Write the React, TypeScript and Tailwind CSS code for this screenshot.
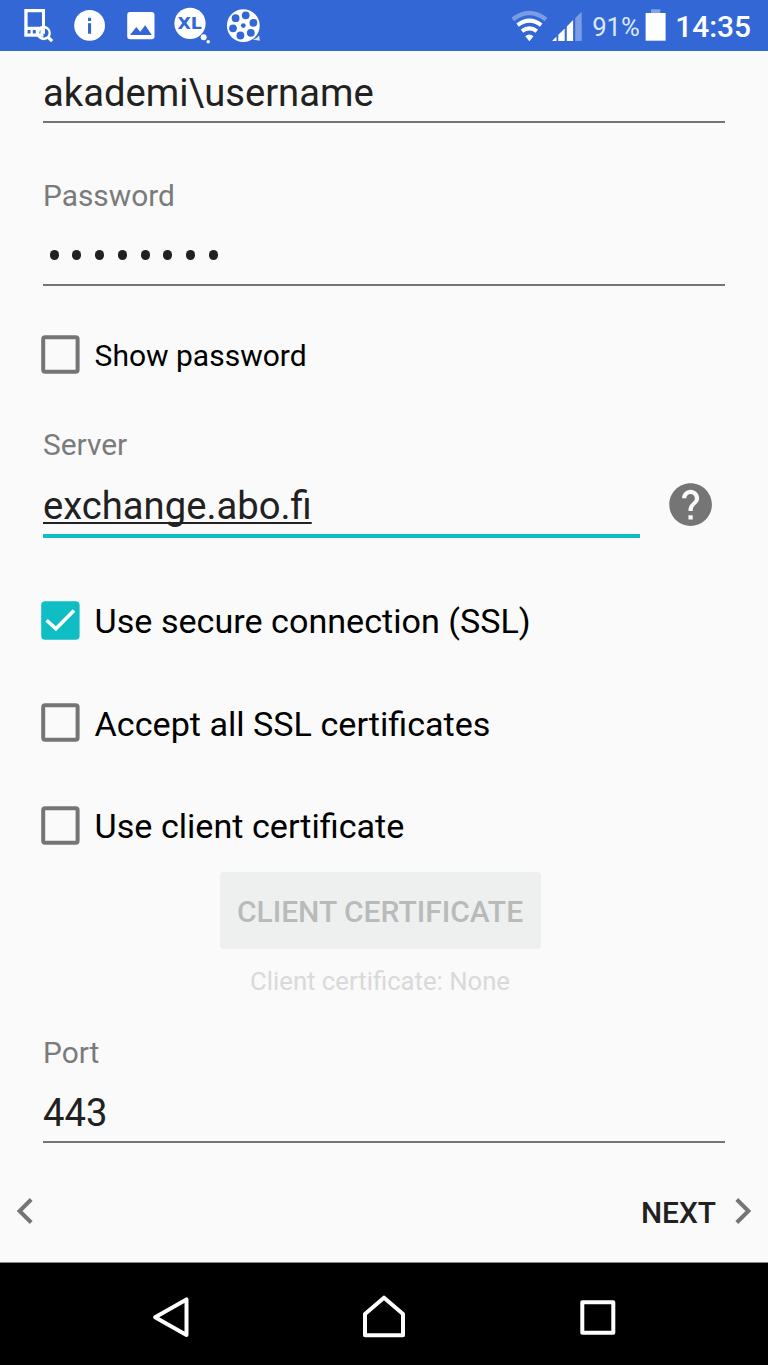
import type { ReactNode } from "react";

const HELP_PATH =
    "M12 2C6.48 2 2 6.48 2 12s4.48 10 10 10 10-4.48 10-10S17.52 2 12 2zm1 17h-2v-2h2v2zm2.07-7.75l-.9.92C13.45 12.9 13 13.5 13 15h-2v-.5c0-1.1.45-2.1 1.17-2.83l1.24-1.26c.37-.36.59-.86.59-1.41 0-1.1-.9-2-2-2s-2 .9-2 2H8c0-2.21 1.79-4 4-4s4 1.79 4 4c0 .88-.36 1.68-.93 2.25z";

function StatusBar() {
    return (
        <header className="flex h-[51px] shrink-0 items-center justify-between bg-[#3367d6] text-white">
            {/* Notifications */}
            <div className="flex pl-[22px]">
                <svg className="h-[51px] w-[32px]" viewBox="22 0 32 51" fill="none">
                    <path d="M24.3 9H45v27.7H24.3z" fill="#fff" />
                    <path d="M27.6 12.2H42v14.6H27.6zM27.6 30h2.9v3.6h-2.9zM32.8 30h2.9v3.6h-2.9zM38 30h2.4v3.6H38z" fill="#3367d6" />
                    <circle cx="43.7" cy="33" r="5.8" stroke="#fff" strokeWidth="2.8" />
                    <path d="M45 28.8a4.3 4.3 0 1 1-1.5 8.5v-3.6h1.5z" fill="#3367d6" />
                    <path d="M47.8 37l4.4 4.2" stroke="#fff" strokeWidth="3.2" />
                </svg>
                <svg className="ml-[19px] h-[51px] w-[33px]" viewBox="73 0 33 51">
                    <circle cx="89.6" cy="25.4" r="15.4" fill="#fff" />
                    <path d="M88 17.8h3.1V21H88zM88 23.2h3.1v10.5H88z" fill="#3367d6" />
                </svg>
                <svg className="ml-[19px] h-[51px] w-[32px]" viewBox="125 0 32 51">
                    <rect x="127.2" y="12" width="27.3" height="27.2" rx="3" fill="#fff" />
                    <path d="M130 34.9l6.3-8 3.9 4.8 5-6.4 6.6 9.6z" fill="#3367d6" />
                </svg>
                <svg className="ml-[16px] h-[51px] w-[38px]" viewBox="173 0 38 51">
                    <circle cx="190" cy="23.4" r="15.6" fill="#fff" />
                    <circle cx="203.7" cy="37.2" r="3" fill="#fff" />
                    <circle cx="208.2" cy="41.7" r="1.8" fill="#fff" />
                    <text x="177.4" y="28.9" fontSize="15.4" fontWeight="700" fontFamily="DejaVu Sans, sans-serif" textLength="24.5" lengthAdjust="spacingAndGlyphs" fill="#3367d6">
                        XL
                    </text>
                </svg>
                <svg className="ml-[14px] h-[51px] w-[36px]" viewBox="225 0 36 51">
                    <circle cx="243.3" cy="25.6" r="16.4" fill="#fff" />
                    <path d="M252.5 39.6q4-1 6.6-4.2l.8 5.3z" fill="#fff" opacity=".85" />
                    <g fill="#3367d6">
                        <circle cx="245.7" cy="15.3" r="3.9" />
                        <circle cx="253.4" cy="22.8" r="3.9" />
                        <circle cx="250.8" cy="32.8" r="3.9" />
                        <circle cx="240.4" cy="35.5" r="3.9" />
                        <circle cx="233" cy="28.3" r="3.9" />
                        <circle cx="235.6" cy="18.2" r="3.9" />
                        <circle cx="243.3" cy="25.6" r="2.4" />
                    </g>
                </svg>
            </div>
            {/* Wifi, signal, battery and clock */}
            <div className="flex items-center pr-[17px]">
                <svg className="h-[51px] w-[38px]" viewBox="510 0 38 51" fill="none">
                    <path d="M512.8 19.6q16.5-13 33.2 0" stroke="#fff" strokeWidth="4.4" opacity=".35" />
                    <path d="M517.6 25.1q11.8-9 23.6 0" stroke="#fff" strokeWidth="4" />
                    <path d="M522 31.2q7.4-5.6 14.8 0" stroke="#fff" strokeWidth="4" />
                    <path d="M525.2 36.2q4.1-3.2 8.3 0l-4.1 5z" fill="#fff" />
                </svg>
                <svg className="ml-[3px] h-[51px] w-[32px]" viewBox="551 0 32 51" fill="#fff">
                    <path d="M552 41l4.5-4.4V41zM558.3 41v-6.2l6.4-6.3V41zM566.8 41V26.4l6.3-6.3V41z" />
                    <path d="M575.2 41V18.1l6.5-6.4V41z" opacity=".35" />
                </svg>
                <span className="ml-[9px] mt-[2px] w-[48px] text-[25.6px] leading-[30px] text-[#dfe8f9]">91%</span>
                <svg className="ml-[5px] h-[51px] w-[21px]" viewBox="645 0 21 51" fill="#fff">
                    <path d="M651 9.3h9.3V13H651z" opacity=".4" />
                    <path d="M645.6 13h20v27.7h-20z" />
                </svg>
                <span className="ml-[9px] mt-[1px] text-[29.87px] font-medium leading-[35px]">14:35</span>
            </div>
        </header>
    );
}

function Checkbox({ checked = false, children }: { checked?: boolean; children: ReactNode }) {
    return (
        <label className="-ml-0.5 flex h-10 items-center text-black">
            <svg className="mr-[14.6px] h-[39px] w-[39px] shrink-0" viewBox="0 0 39 39" fill="none">
                {checked ? (
                    <>
                        <rect x="0.2" y="0.3" width="38.4" height="38.4" rx="4" fill="#0fbec5" />
                        <path d="M5.6 19.2l9.3 8.6L33 9.4" stroke="#fff" strokeWidth="3.6" />
                    </>
                ) : (
                    <rect x="2.2" y="2.3" width="34.4" height="34.4" rx="2" stroke="#757575" strokeWidth="4" />
                )}
            </svg>
            <span className="pt-[3px]">{children}</span>
        </label>
    );
}

function Label({ children }: { children: ReactNode }) {
    return <div className="text-[29.87px] leading-[35px] text-[#7b7b7b]">{children}</div>;
}

export default function App() {
    return (
        <div className="flex h-[1365px] w-[768px] flex-col overflow-hidden bg-[#fafafa] font-['Roboto',sans-serif] text-[#212121]">
            <StatusBar />

            <main className="flex flex-1 flex-col px-[43px]">
                {/* Username */}
                <div className="mt-[19px] h-[53px] border-b-2 border-[#757575] pt-[1px] text-[38.2px] leading-[45px]">akademi\username</div>

                {/* Password */}
                <div className="mt-[55px]">
                    <Label>Password</Label>
                    <div className="flex h-[73px] items-center gap-[13.75px] border-b-2 border-[#757575] pl-[6.5px] pt-[13px]">
                        {Array.from({ length: 8 }, (_, i) => (
                            <span key={i} className="h-[10.5px] w-[9px] rounded-full bg-[#212121]" />
                        ))}
                    </div>
                </div>
                <div className="mt-[48px] text-[30px]">
                    <Checkbox>Show password</Checkbox>
                </div>

                {/* Server */}
                <div className="mt-[53px]">
                    <Label>Server</Label>
                    <div className="flex">
                        <div className="mt-[21px] h-[55px] w-[597px] border-b-[4px] border-[#0fbec5] pt-[1px] text-[38.2px] leading-[45px]">
                            <span className="underline decoration-2 underline-offset-[3px] [text-decoration-skip-ink:none]">exchange.abo.fi</span>
                        </div>
                        <svg className="ml-[25px] mt-[17px] h-[51.2px] w-[51.2px]" viewBox="0 0 24 24" fill="#757575">
                            <path d={HELP_PATH} />
                        </svg>
                    </div>
                </div>

                {/* Security */}
                <div className="mt-[62px] flex flex-col gap-[62.6px] text-[34.13px]">
                    <Checkbox checked>Use secure connection (SSL)</Checkbox>
                    <Checkbox>Accept all SSL certificates</Checkbox>
                    <Checkbox>Use client certificate</Checkbox>
                </div>
                <div className="mr-[8px] mt-[26.8px] flex flex-col items-center">
                    <button disabled className="h-[77px] w-[321px] rounded-[4px] bg-[#eef0f0] pt-[3px] text-[30px] font-medium text-[#b9bbbb]">
                        CLIENT CERTIFICATE
                    </button>
                    <div className="mt-[17px] text-[25.7px] leading-[30px] text-[#d9d9d9]">Client certificate: None</div>
                </div>

                {/* Port */}
                <div className="mt-[39px]">
                    <Label>Port</Label>
                    <div className="mt-[20px] h-[53px] border-b-2 border-[#757575] pt-[1px] text-[38.2px] leading-[45px]">443</div>
                </div>
            </main>

            <footer className="flex h-[102px] shrink-0 items-center justify-between pl-[16px] pr-[16px]">
                <svg className="h-[28px] w-[18px]" viewBox="0 0 18 28" fill="none">
                    <path d="M15.2 2.5L3.6 14l11.6 11.5" stroke="#757575" strokeWidth="4" />
                </svg>
                <div className="flex items-center text-[29.87px] font-medium">
                    <span className="-mb-[4px]">NEXT</span>
                    <svg className="ml-[18px] h-[28px] w-[18px]" viewBox="0 0 18 28" fill="none">
                        <path d="M2.8 2.5L14.4 14 2.8 25.5" stroke="#757575" strokeWidth="4" />
                    </svg>
                </div>
            </footer>

            {/* Android navigation */}
            <nav className="flex h-[103px] shrink-0 border-t border-[#8a8a8a] bg-black pl-[152px]">
                <svg className="h-[102px] w-[38px]" viewBox="152 1263 38 102" fill="none" stroke="#fff" strokeWidth="4" strokeLinejoin="round">
                    <path d="M186.5 1299.4v35.6l-31.4-17.8z" />
                </svg>
                <svg className="ml-[172px] h-[102px] w-[44px]" viewBox="362 1263 44 102" fill="none" stroke="#fff" strokeWidth="4" strokeLinejoin="round">
                    <path d="M384 1297.7l19 16.3v21.3h-38V1314z" />
                </svg>
                <svg className="ml-[172px] h-[102px] w-[40px]" viewBox="578 1263 40 102" fill="none" stroke="#fff" strokeWidth="4" strokeLinejoin="round">
                    <path d="M582.3 1302.2h31v30.6h-31z" />
                </svg>
            </nav>
        </div>
    );
}
